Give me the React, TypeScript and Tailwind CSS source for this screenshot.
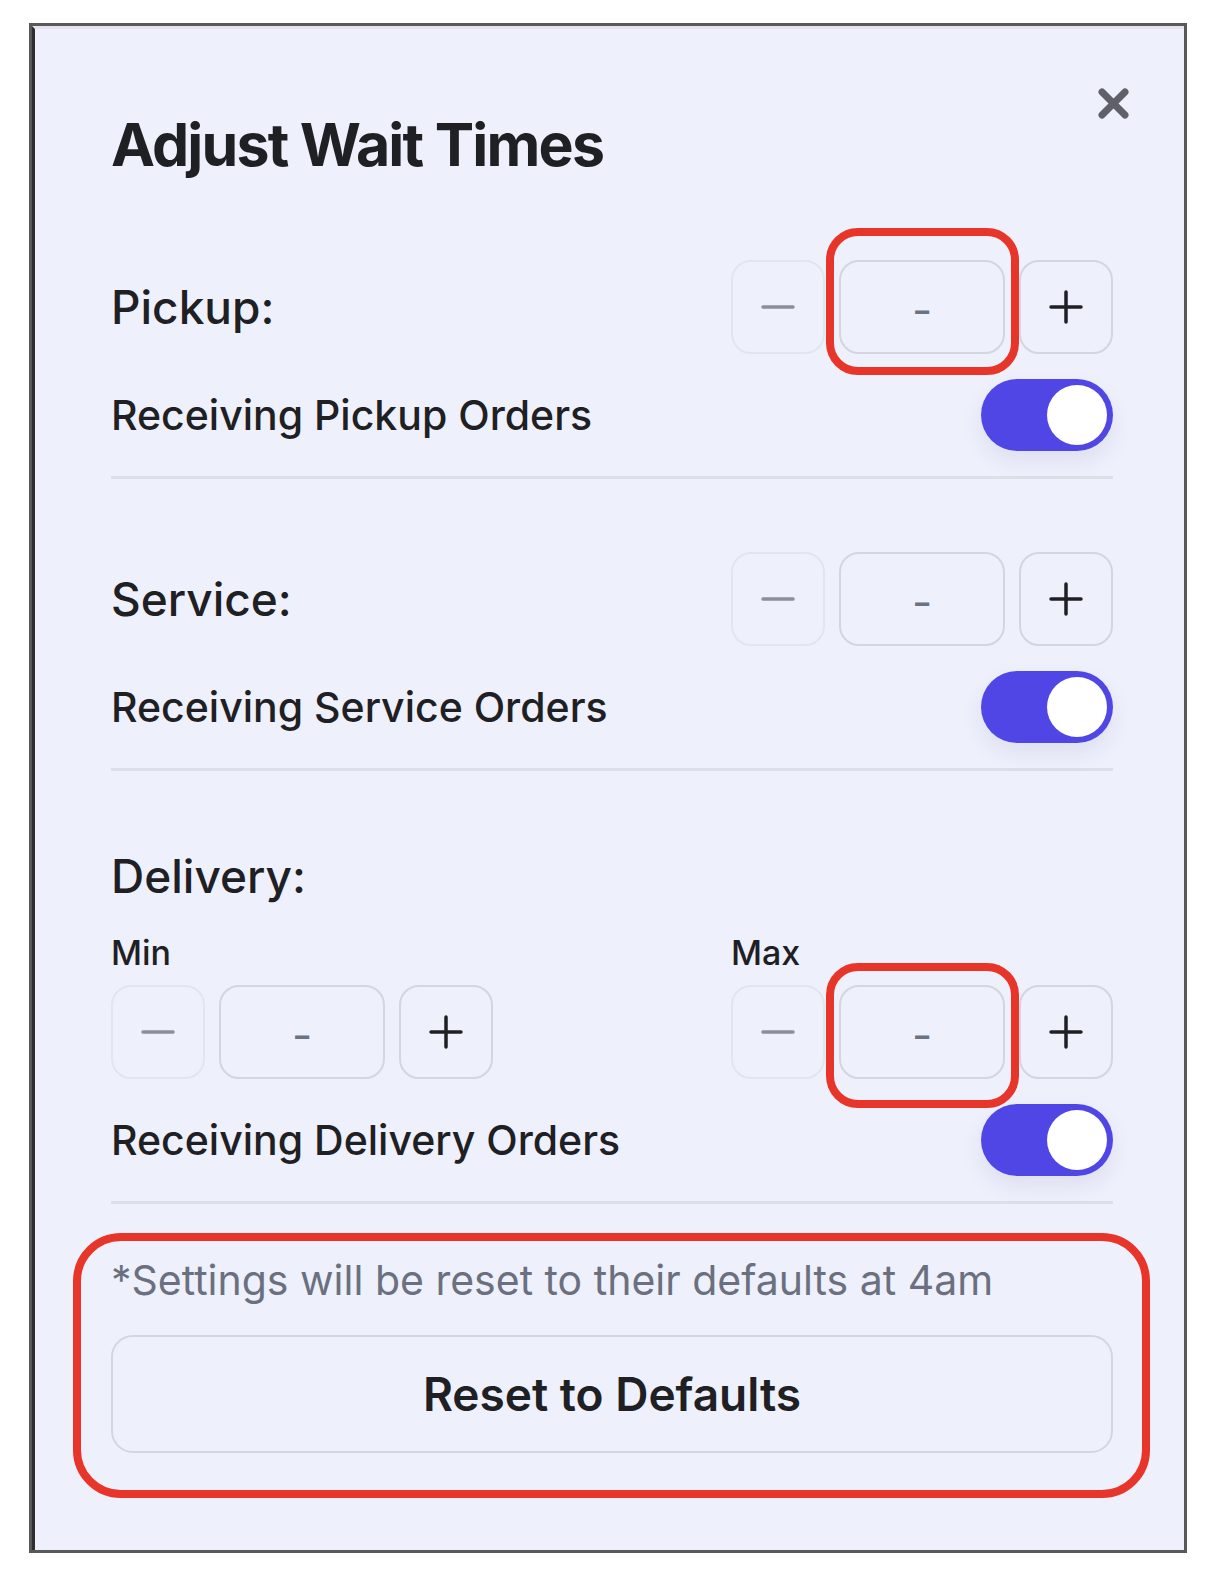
import React from "react";

const MinusIcon = () => (
  <svg width="34" height="8" viewBox="0 0 34 8">
    <line x1="2" y1="4" x2="32" y2="4" stroke="#8b8f98" strokeWidth="3.5" strokeLinecap="round" />
  </svg>
);

const PlusIcon = () => (
  <svg width="34" height="34" viewBox="0 0 34 34">
    <line x1="2" y1="17" x2="32" y2="17" stroke="#1f2024" strokeWidth="3.5" strokeLinecap="round" />
    <line x1="17" y1="2" x2="17" y2="32" stroke="#1f2024" strokeWidth="3.5" strokeLinecap="round" />
  </svg>
);

const Stepper = () => (
  <div className="flex items-center">
    <button className="w-[94px] h-[94px] rounded-[20px] border-2 border-[#e3e5ee] flex items-center justify-center">
      <MinusIcon />
    </button>
    <div className="ml-[14px] w-[166px] h-[94px] rounded-[20px] border-2 border-[#d4d6df] flex items-center justify-center text-[44px] leading-none text-[#6b7280]">
      <span className="pt-[6px]">-</span>
    </div>
    <button className="ml-[14px] w-[94px] h-[94px] rounded-[20px] border-2 border-[#d4d6df] flex items-center justify-center">
      <PlusIcon />
    </button>
  </div>
);

const Toggle = () => (
  <div className="w-[132px] h-[72px] rounded-full bg-[#4f46e5] p-[6px] flex justify-end shadow-[0_10px_22px_rgba(40,40,90,0.08)]">
    <div className="w-[60px] h-[60px] rounded-full bg-white" />
  </div>
);

const ToggleRow = ({ label }: { label: string }) => (
  <div className="mt-[25px] flex items-center justify-between">
    <span className="text-[41px] leading-[48px] font-medium">{label}</span>
    <Toggle />
  </div>
);

const Divider = () => <div className="mt-[25px] h-[3px] bg-[#dcdee8]" />;

export default function App() {
  return (
    <div className="w-[1220px] h-[1586px] bg-white pt-[23px] pl-[29px] font-['Inter',sans-serif] text-[#1f2024]">
      <div className="relative w-[1158px] h-[1530px] border-[3px] border-[#595959]">
        <div className="h-full border-l-[3px] border-l-[#2e2e2e] border-t-[3px] border-t-[#e6e1ee] bg-[#eef0fc] pl-[76px] pt-[80px]">
          <div className="w-[1002px]">
            <h1 className="text-[59px] leading-[72px] font-bold tracking-[-0.03em]">Adjust Wait Times</h1>

            {/* Pickup */}
            <div className="mt-[79px] flex items-center justify-between">
              <span className="text-[46px] leading-[58px] font-medium">Pickup:</span>
              <Stepper />
            </div>
            <ToggleRow label="Receiving Pickup Orders" />
            <Divider />

            {/* Service */}
            <div className="mt-[73px] flex items-center justify-between">
              <span className="text-[46px] leading-[58px] font-medium">Service:</span>
              <Stepper />
            </div>
            <ToggleRow label="Receiving Service Orders" />
            <Divider />

            {/* Delivery */}
            <div className="mt-[76px] text-[46px] leading-[58px] font-medium">Delivery:</div>
            <div className="mt-[28px] flex justify-between">
              <div>
                <div className="text-[34px] leading-[40px] font-medium">Min</div>
                <div className="mt-[12px]">
                  <Stepper />
                </div>
              </div>
              <div>
                <div className="text-[34px] leading-[40px] font-medium">Max</div>
                <div className="mt-[12px]">
                  <Stepper />
                </div>
              </div>
            </div>
            <ToggleRow label="Receiving Delivery Orders" />
            <Divider />

            <p className="mt-[53px] text-[41px] leading-[46px] text-[#6b7080]">
              *Settings will be reset to their defaults at 4am
            </p>
            <button className="mt-[32px] w-full h-[118px] rounded-[22px] border-2 border-[#d4d6df] text-[46px] font-semibold">
              Reset to Defaults
            </button>
          </div>
        </div>

        {/* close */}
        <button className="absolute left-[1065px] top-[61px] w-[33px] h-[33px]">
          <svg width="33" height="33" viewBox="0 0 33 33">
            <line x1="5" y1="5" x2="28" y2="28" stroke="#5f6068" strokeWidth="7" strokeLinecap="round" />
            <line x1="28" y1="5" x2="5" y2="28" stroke="#5f6068" strokeWidth="7" strokeLinecap="round" />
          </svg>
        </button>

        {/* annotations */}
        <div className="absolute left-[794px] top-[202px] w-[193px] h-[147px] border-[8px] border-[#e8352a] rounded-[32px]" />
        <div className="absolute left-[794px] top-[937px] w-[193px] h-[145px] border-[8px] border-[#e8352a] rounded-[32px]" />
        <div className="absolute left-[41px] top-[1207px] w-[1077px] h-[265px] border-[8px] border-[#e8352a] rounded-[48px]" />
      </div>
    </div>
  );
}
